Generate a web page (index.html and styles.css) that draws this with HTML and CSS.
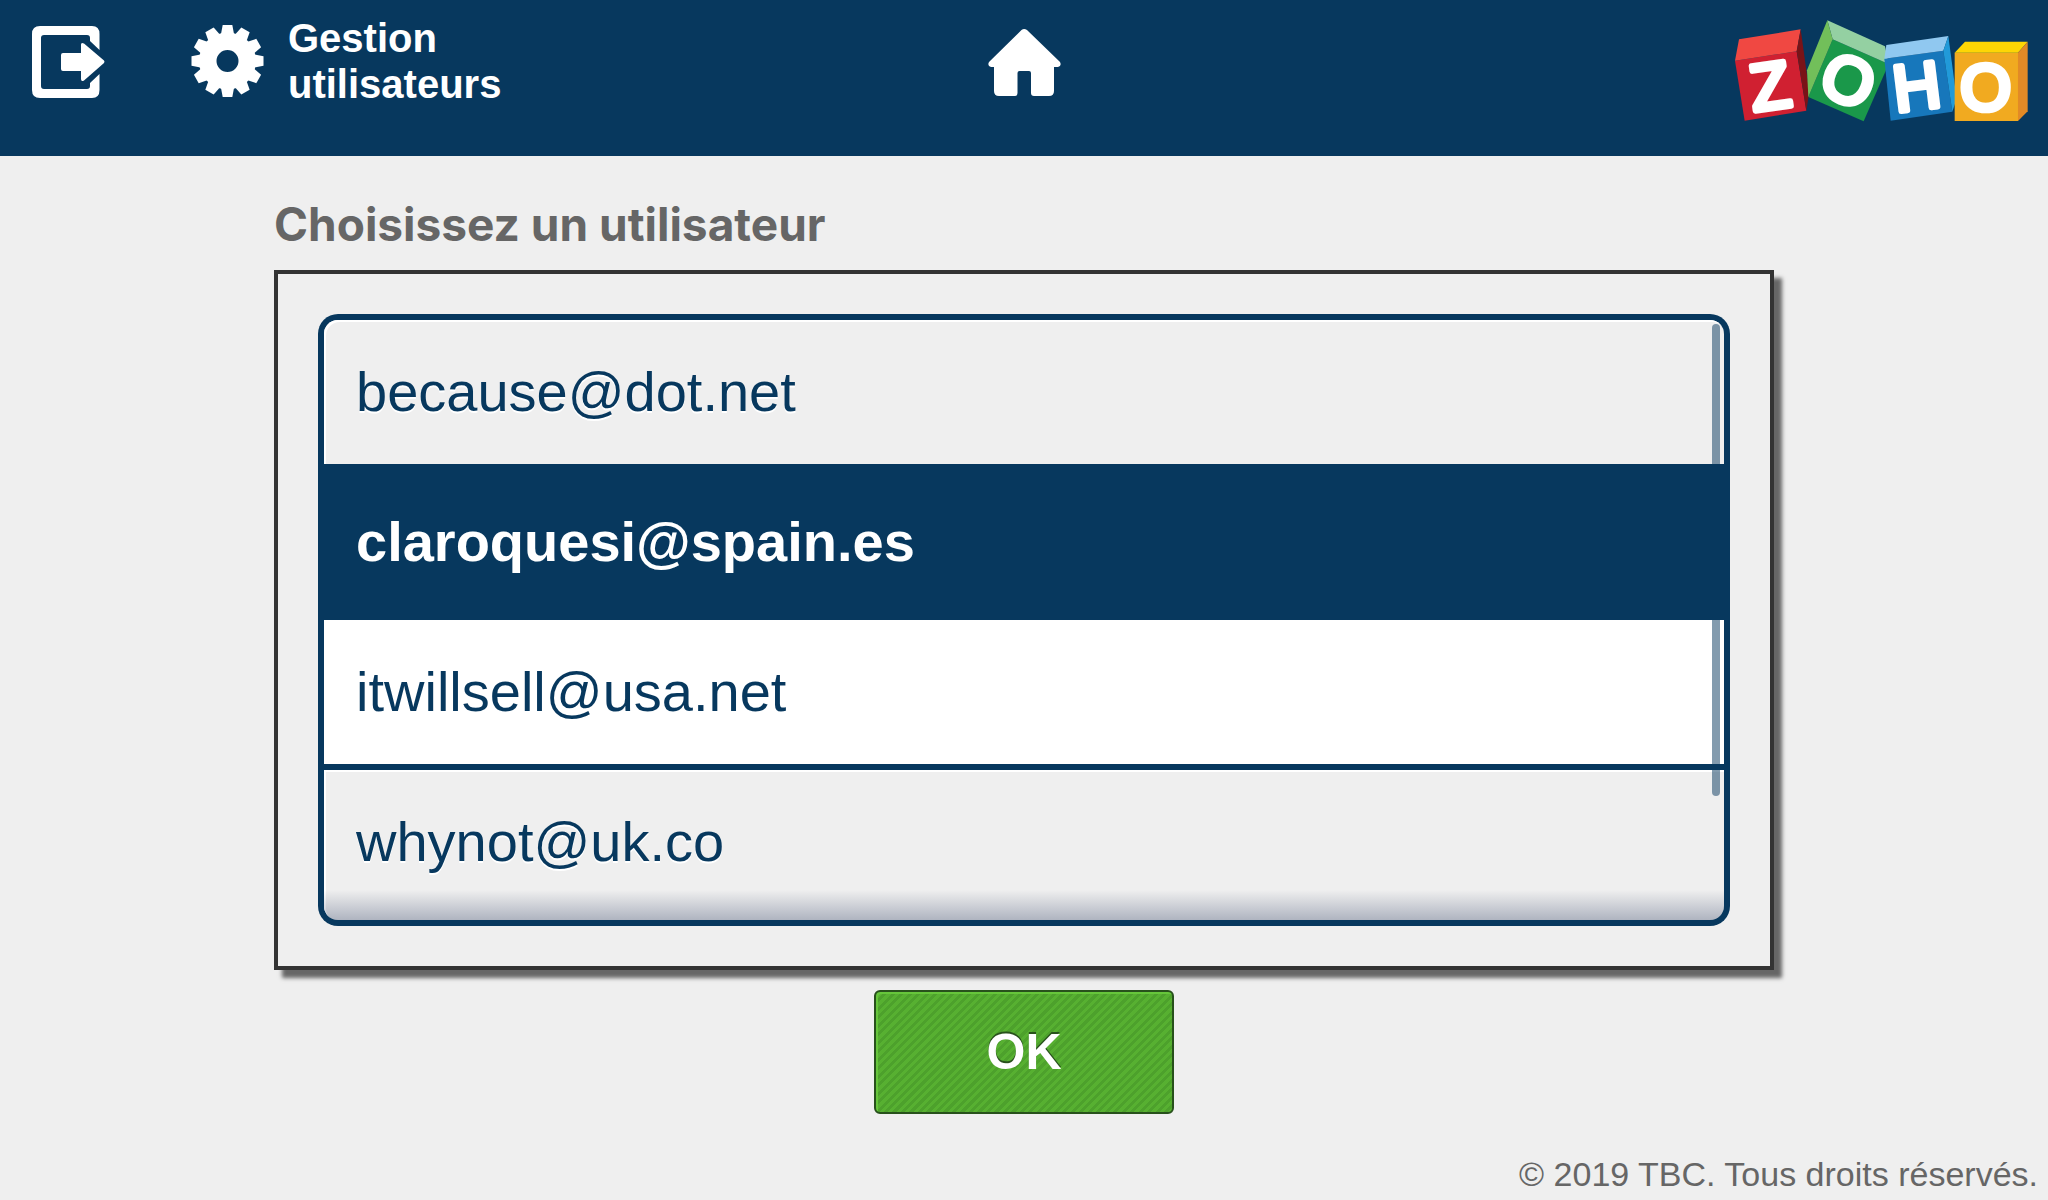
FILE: index.html
```html
<!DOCTYPE html>
<html lang="fr">

<head>
    <meta charset="UTF-8" />
    <meta name="viewport" content="width=device-width, initial-scale=1.0" />
    <title>Gestion utilisateurs</title>
    <link rel="stylesheet" href="styles.css">
</head>

<body>
    <header class="topbar">
        <nav class="topbar-left">
            <a href="#logout" class="icon-link" aria-label="Déconnexion">
                <svg width="73" height="72" viewBox="0 0 73 72" fill="#fff">
                    <path d="M8 0H60Q67.500 0 67.500 8V24L58 15V12Q58 9 55 9H12Q9 9 9 12V60Q9 63 12 63H55Q58 63 58 60V57L67.500 48V64Q67.500 72 60 72H8Q0 72 0 64V8Q0 0 8 0Z" />
                    <path d="M31 27H49V18.500Q49 16 52 17.500L72 34.500Q73 35.700 72 37L52 54.500Q49 56 49 53V45H31Q29 45 29 43V29Q29 27 31 27Z" />
                </svg>
            </a>
            <a href="#users" class="section-link">
                <svg width="73" height="72" viewBox="-36.5 -36 73 72" fill="#fff">
                    <path fill-rule="evenodd" d="M0-28.500A28.500 28.500 0 1 1 0 28.500A28.500 28.500 0 1 1 0-28.500ZM0-11A11 11 0 1 0 0 11A11 11 0 1 0 0-11Z" />
                    <g id="teeth">
                        <path id="tooth" d="M-6.500-27L-4.800-36H4.800L6.500-27Z" />
                        <use href="#tooth" transform="rotate(30)" />
                        <use href="#tooth" transform="rotate(60)" />
                        <use href="#tooth" transform="rotate(90)" />
                        <use href="#tooth" transform="rotate(120)" />
                        <use href="#tooth" transform="rotate(150)" />
                    </g>
                    <use href="#teeth" transform="rotate(180)" />
                </svg>
                <span class="section-name">Gestion<br>utilisateurs</span>
            </a>
        </nav>

        <a href="#home" class="icon-link" aria-label="Accueil">
            <svg width="73" height="68" viewBox="0 0 73 68" fill="#fff">
                <path d="M33.500 1Q36 -1 39 1L72 33Q74 37 70 38H66V62Q66 67 61 67H46Q43 67 43 64V44Q43 42 41 42H31.500Q29.500 42 29.500 44V64Q29.500 67 27 67H11Q6 67 6 62V38H3Q-1 37 1 33Z" />
            </svg>
        </a>

        <!-- Logo: four coloured blocks -->
        <svg class="logo" width="293" height="102" viewBox="46 29 879 306" role="img" aria-label="Zoho">
            <polygon fill="#d02031" points="46,151 231,123 260,301 75,331" />
            <polygon fill="#f04842" points="58,87 243,57 231,123 46,151" />
            <polygon fill="#7a1317" points="243,57 269,245 260,301 231,123" />

            <polygon fill="#1a984a" points="339,87 507,161 432,333 266,260" />
            <polygon fill="#94d0a2" points="323,30 496,108 507,161 339,87" />
            <polygon fill="#72bf5a" points="323,30 339,87 266,260 262,180" />

            <polygon fill="#1777bb" points="494,145 671,121 698,304 513,331" />
            <polygon fill="#90c8f0" points="500,104 686,77 671,121 494,145" />
            <polygon fill="#219ad9" points="686,77 711,265 698,304 671,121" />

            <polygon fill="#f1aa20" points="705,127 895,127 895,332 705,332" />
            <polygon fill="#fed604" points="736,94 924,94 895,127 705,127" />
            <polygon fill="#e28a26" points="924,94 924,303 895,332 895,127" />

            <g class="logo-letters">
                <text transform="translate(151 227) rotate(-8)" y="68">Z</text>
                <text transform="translate(386 210) rotate(22)" y="68">O</text>
                <text transform="translate(591 228) rotate(-7)" y="68">H</text>
                <text transform="translate(798 231)" y="68">O</text>
            </g>
        </svg>
    </header>

    <main class="container">
        <h1>Choisissez un utilisateur</h1>

        <div class="panel">
            <div class="list-wrap">
                <ul class="user-list">
                    <li><button type="button" class="user">because@dot.net</button></li>
                    <li><button type="button" class="user selected" aria-pressed="true">claroquesi@spain.es</button></li>
                    <li><button type="button" class="user highlighted">itwillsell@usa.net</button></li>
                    <li><button type="button" class="user">whynot@uk.co</button></li>
                </ul>
                <div class="scroll-thumb"></div>
                <div class="list-fade"></div>
            </div>
        </div>

        <button type="submit" class="ok-button">OK</button>
    </main>

    <footer class="footer">© 2019 TBC. Tous droits réservés.</footer>
</body>

</html>
```
FILE: styles.css
```css
* {
    margin: 0;
    padding: 0;
    box-sizing: border-box;
}

body {
    display: flex;
    flex-direction: column;
    min-height: 100vh;
    background-color: #efefef;
    color: #666;
    font-family: "Liberation Sans", Arial, sans-serif;
}

svg {
    display: block;
}


/* Top bar */

.topbar {
    display: grid;
    grid-template-columns: 1fr auto 1fr;
    align-items: start;
    height: 156px;
    padding: 20px 20px 0 32px;
    background-color: #07385e;
}

.topbar-left {
    display: flex;
    gap: 86px;
}

.icon-link {
    padding-top: 6px;
}

.topbar > .icon-link {
    padding-top: 9px;
    margin-right: 12px;
}

.section-link {
    display: flex;
    gap: 24px;
    color: #fff;
    text-decoration: none;
}

.section-link svg {
    margin-top: 5px;
}

.section-name {
    margin-top: -5px;
    font-size: 40px;
    font-weight: bold;
    line-height: 46px;
}

.logo {
    justify-self: end;
    overflow: visible;
}

.logo-letters {
    fill: #fff;
    stroke: #fff;
    stroke-width: 17px;
    stroke-linejoin: round;
    font-size: 196px;
    text-anchor: middle;
}


/* User list */

.container {
    display: flex;
    flex-direction: column;
    align-items: center;
    width: 100%;
    max-width: 1500px;
    margin: 0 auto;
}

h1 {
    align-self: flex-start;
    margin: 40px 0 18px;
    font-family: Inter, sans-serif;
    font-size: 46px;
    line-height: 56px;
}

.panel {
    width: 100%;
    padding: 40px;
    border: 4px solid #333;
    box-shadow: 8px 8px 4px #666;
}

.list-wrap {
    position: relative;
    overflow: hidden;
    border-radius: 20px;
    background-color: #07385e;
}

.user-list {
    list-style: none;
    padding: 6px 0;
}

.user {
    display: block;
    width: calc(100% - 12px);
    height: 144px;
    margin: 0 6px 6px;
    padding: 0 32px 2px;
    border: none;
    background-color: #efefef;
    box-shadow: inset 2px 2px 0 #fff;
    color: #07385e;
    font-family: inherit;
    font-size: 56px;
    text-align: left;
    text-shadow: 0 2px 0 #fff;
    cursor: pointer;
}

.user-list li:first-child .user {
    border-radius: 14px 14px 0 0;
}

.user-list li:last-child .user {
    height: 150px;
    margin-bottom: 0;
    padding-bottom: 8px;
    border-radius: 0 0 14px 14px;
}

.user.highlighted {
    background-color: #fff;
}

/* above the scroll thumb */
.user.selected {
    position: relative;
    z-index: 1;
    background-color: #07385e;
    box-shadow: none;
    color: #fff;
    font-weight: bold;
    text-shadow: none;
}

.scroll-thumb {
    position: absolute;
    top: 10px;
    right: 10px;
    width: 8px;
    height: 472px;
    border-radius: 4px;
    background-color: rgba(7, 56, 94, 0.5);
}

.list-fade {
    position: absolute;
    right: 6px;
    bottom: 6px;
    left: 6px;
    height: 30px;
    border-radius: 0 0 14px 14px;
    background: linear-gradient(rgba(40, 56, 94, 0), rgba(40, 56, 94, 0.32));
    pointer-events: none;
}

.ok-button {
    width: 300px;
    height: 124px;
    margin-top: 20px;
    border: 2px solid #28511c;
    border-radius: 6px;
    background: repeating-linear-gradient(-45deg, #57b031 0 3px, #4da12c 3px 6px);
    box-shadow: inset 2px 2px 0 #66c63b;
    color: #fff;
    font-family: inherit;
    font-size: 50px;
    font-weight: bold;
    text-shadow: 0 -2px 0 #28511c;
    cursor: pointer;
}


/* Footer */

.footer {
    margin-top: auto;
    padding: 0 10px 6px;
    font-size: 34px;
    line-height: 40px;
    text-align: right;
}
```
